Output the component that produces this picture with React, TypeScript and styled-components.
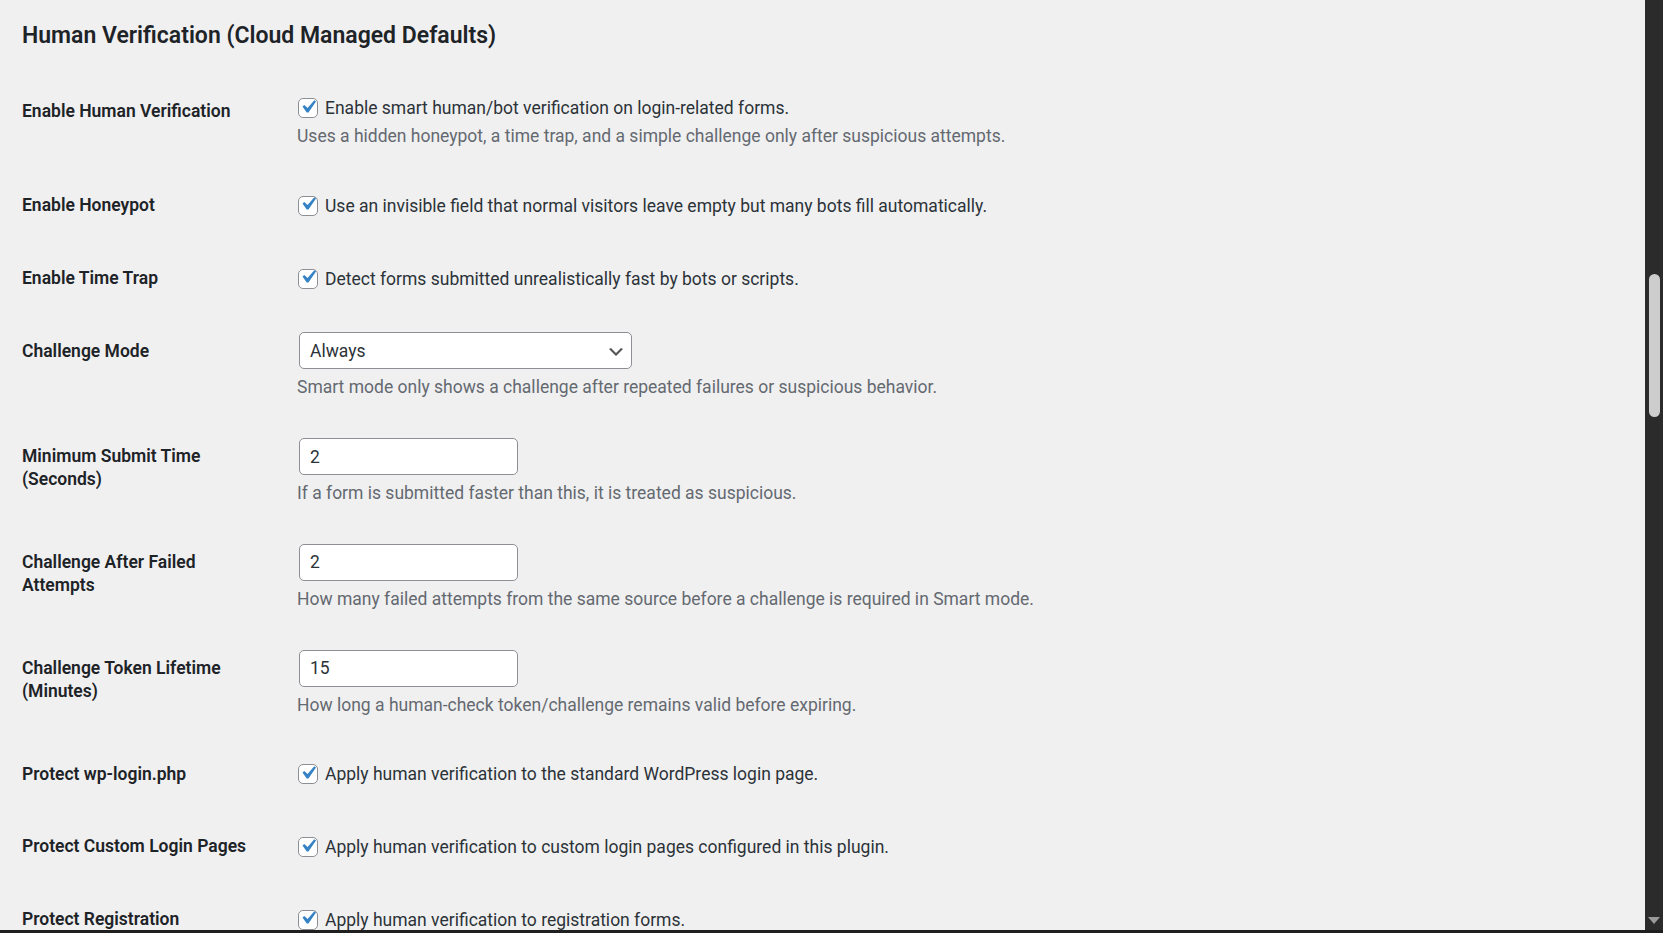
import React from "react";
import styled, { createGlobalStyle } from "styled-components";

const FONT = `Roboto, "Liberation Sans", sans-serif`;

const GlobalStyle = createGlobalStyle`
  html, body {
    margin: 0;
    padding: 0;
    background: #f0f0f1;
    overflow: hidden;
  }
  body {
    font-family: ${FONT};
    color: #1d2327;
  }
`;

const Screen = styled.div`
  display: flex;
  flex-direction: column;
  width: 100vw;
  height: 100vh;
`;

const Body = styled.div`
  flex: 1;
  display: flex;
  min-height: 0;
`;

const Main = styled.main`
  flex: 1;
  min-width: 0;
  overflow: hidden;
  padding: 21px 0 0 22px;
  box-sizing: border-box;
`;

const Title = styled.h2`
  margin: 0 0 22.6px;
  font-size: 23px;
  line-height: 30px;
  font-weight: 600;
  color: #1d2327;
`;

const FormTable = styled.div`
  display: flex;
  flex-direction: column;
`;

const Row = styled.div`
  display: grid;
  grid-template-columns: 262.5px 1fr;
  align-items: center;
`;

const Label = styled.div`
  align-self: start;
  width: 236px;
  padding: 26px 26.5px 24px 0;
  font-size: 17.5px;
  line-height: 22.75px;
  font-weight: 600;
  color: #1d2327;
`;

const Field = styled.div`
  padding: 18.75px 12.5px;
  display: flex;
  flex-direction: column;
  align-items: flex-start;
`;

const CheckLine = styled.label`
  display: flex;
  align-items: center;
  gap: 7px;
  min-height: 25.75px;
  padding-top: 3px;
  font-size: 17.5px;
  color: #2c3338;
  margin-left: 1px;
`;

const Box = styled.span`
  display: inline-flex;
  align-items: center;
  justify-content: center;
  width: 20px;
  height: 20px;
  box-sizing: border-box;
  border: 1px solid #8c8f94;
  border-radius: 5px;
  background: #fff;
  flex: none;
  overflow: visible;
`;

const Tick = styled.svg`
  flex: none;
  width: 26px;
  height: 26px;
  margin: -3px 0 0 -1px;
`;

const Description = styled.p<{ $tight?: boolean }>`
  margin: ${(p) => (p.$tight ? "2px" : "5px")} 0 0;
  font-size: 17.5px;
  line-height: 26.25px;
  color: #646970;
`;

const Control = styled.div<{ $w: number }>`
  display: flex;
  align-items: center;
  width: ${(p) => p.$w}px;
  height: 37px;
  box-sizing: border-box;
  border: 1px solid #8c8f94;
  border-radius: 5px;
  background: #fff;
  padding: 0 10px;
  margin-left: 2px;
  font-size: 17.5px;
  color: #2c3338;
`;

const Value = styled.span`
  flex: 1;
`;

const Chevron = styled.svg`
  width: 20px;
  height: 20px;
  margin-right: -5px;
  margin-top: 2px;
`;

const ScrollTrack = styled.div`
  width: 18px;
  background: #2b2b2b;
  display: flex;
  flex-direction: column;
  align-items: center;
`;

const Thumb = styled.div`
  margin-top: 274px;
  width: 11px;
  height: 143px;
  border-radius: 6px;
  background: #cdcdcd;
`;

const DownArrow = styled.div`
  margin-top: auto;
  margin-bottom: 6px;
  width: 0;
  height: 0;
  border-left: 6px solid transparent;
  border-right: 6px solid transparent;
  border-top: 7px solid #9a9a9a;
`;

const BottomBar = styled.div`
  height: 3px;
  background: #1f1f1f;
`;

const Check = () => (
  <Box>
    <Tick viewBox="0 0 20 20">
      <path d="M14.83 4.89l1.34.94-5.81 8.38H9.02L5.78 9.67l1.34-1.25 2.57 2.4z" fill="#3582c4" />
    </Tick>
  </Box>
);

type RowDef =
  | { kind: "check"; label: string; text: string; desc?: string }
  | { kind: "select"; label: string; value: string; desc: string }
  | { kind: "input"; label: string; value: string; desc: string };

const rows: RowDef[] = [
  {
    kind: "check",
    label: "Enable Human Verification",
    text: "Enable smart human/bot verification on login-related forms.",
    desc: "Uses a hidden honeypot, a time trap, and a simple challenge only after suspicious attempts.",
  },
  {
    kind: "check",
    label: "Enable Honeypot",
    text: "Use an invisible field that normal visitors leave empty but many bots fill automatically.",
  },
  { kind: "check", label: "Enable Time Trap", text: "Detect forms submitted unrealistically fast by bots or scripts." },
  {
    kind: "select",
    label: "Challenge Mode",
    value: "Always",
    desc: "Smart mode only shows a challenge after repeated failures or suspicious behavior.",
  },
  {
    kind: "input",
    label: "Minimum Submit Time (Seconds)",
    value: "2",
    desc: "If a form is submitted faster than this, it is treated as suspicious.",
  },
  {
    kind: "input",
    label: "Challenge After Failed Attempts",
    value: "2",
    desc: "How many failed attempts from the same source before a challenge is required in Smart mode.",
  },
  {
    kind: "input",
    label: "Challenge Token Lifetime (Minutes)",
    value: "15",
    desc: "How long a human-check token/challenge remains valid before expiring.",
  },
  { kind: "check", label: "Protect wp-login.php", text: "Apply human verification to the standard WordPress login page." },
  {
    kind: "check",
    label: "Protect Custom Login Pages",
    text: "Apply human verification to custom login pages configured in this plugin.",
  },
  { kind: "check", label: "Protect Registration", text: "Apply human verification to registration forms." },
];

export default function App() {
  return (
    <>
      <GlobalStyle />
      <Screen>
        <Body>
          <Main>
            <Title>Human Verification (Cloud Managed Defaults)</Title>
            <FormTable>
              {rows.map((r) => (
                <Row key={r.label}>
                  <Label>{r.label}</Label>
                  <Field>
                    {r.kind === "check" && (
                      <CheckLine>
                        <Check />
                        {r.text}
                      </CheckLine>
                    )}
                    {r.kind === "select" && (
                      <Control $w={333}>
                        <Value>{r.value}</Value>
                        <Chevron viewBox="0 0 20 20">
                          <path d="M5 6l5 5 5-5 2 1-7 7-7-7 2-1z" fill="#555" />
                        </Chevron>
                      </Control>
                    )}
                    {r.kind === "input" && (
                      <Control $w={219}>
                        <Value>{r.value}</Value>
                      </Control>
                    )}
                    {r.desc && <Description $tight={r.kind === "check"}>{r.desc}</Description>}
                  </Field>
                </Row>
              ))}
            </FormTable>
          </Main>
          <ScrollTrack>
            <Thumb />
            <DownArrow />
          </ScrollTrack>
        </Body>
        <BottomBar />
      </Screen>
    </>
  );
}
